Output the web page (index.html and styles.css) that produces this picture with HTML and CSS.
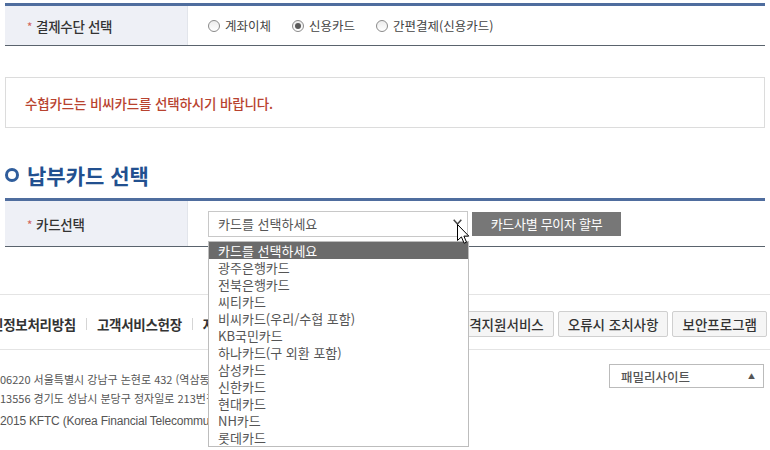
FILE: index.html
```html
<!DOCTYPE html>
<html lang="ko">
<head>
<meta charset="utf-8">
<title>납부카드 선택</title>
<link rel="stylesheet" href="styles.css">
</head>
<body>
<div class="page">
  <div class="form-table">
    <div class="row">
      <div class="th"><span class="req">*</span>결제수단 선택</div>
      <div class="td">
        <label class="radio"><span class="dot"></span>계좌이체</label>
        <label class="radio checked"><span class="dot"></span>신용카드</label>
        <label class="radio"><span class="dot"></span>간편결제(신용카드)</label>
      </div>
    </div>
  </div>

  <div class="notice">수협카드는 비씨카드를 선택하시기 바랍니다.</div>

  <h2 class="sec-title"><span class="ring"></span>납부카드 선택</h2>

  <div class="form-table card">
    <div class="row">
      <div class="th"><span class="req">*</span>카드선택</div>
      <div class="td">
        <div class="select-wrap">
          <div class="select">카드를 선택하세요<svg class="chev" width="9" height="6" viewBox="0 0 9 6"><path d="M0.7 0.7L4.5 5L8.3 0.7" fill="none" stroke="#444" stroke-width="1.5"/></svg></div>
          <ul class="listbox">
            <li class="sel">카드를 선택하세요</li>
            <li>광주은행카드</li>
            <li>전북은행카드</li>
            <li>씨티카드</li>
            <li>비씨카드(우리/수협 포함)</li>
            <li>KB국민카드</li>
            <li>하나카드(구 외환 포함)</li>
            <li>삼성카드</li>
            <li>신한카드</li>
            <li>현대카드</li>
            <li>NH카드</li>
            <li>롯데카드</li>
          </ul>
          <svg class="cursor" width="13" height="20" viewBox="0 0 13 20"><path d="M0.5 0.5V16.5L4.4 12.9L7.1 19.2L9.5 18.2L6.9 12.1H11.8Z" fill="#fff" stroke="#000" stroke-width="1" stroke-linejoin="miter"/></svg>
        </div>
        <button class="btn-dark" type="button">카드사별 무이자 할부</button>
      </div>
    </div>
  </div>
</div>

<footer class="footer">
  <div class="foot-nav">
    <div class="links">
      <span class="lnk">개인정보처리방침</span><span class="sep"></span>
      <span class="lnk">고객서비스헌장</span><span class="sep"></span>
      <span class="lnk">자주하는 질문</span>
    </div>
    <div class="btns">
      <button class="fbtn" type="button">원격지원서비스</button>
      <button class="fbtn" type="button">오류시 조치사항</button>
      <button class="fbtn" type="button">보안프로그램</button>
    </div>
  </div>
  <div class="foot-info">
    <div class="addr">
      <p class="line">06220 서울특별시 강남구 논현로 432 (역삼동, 금융결제원)</p>
      <p class="line">13556 경기도 성남시 분당구 정자일로 213번길 18</p>
      <p class="line copy">2015 KFTC (Korea Financial Telecommunications &amp; Clearings Institute)</p>
    </div>
    <div class="family">패밀리사이트<span class="tri">▲</span></div>
  </div>
</footer>
</body>
</html>
```
FILE: styles.css
```css
html, body {
  margin: 0;
  padding: 0;
}
body {
  width: 770px;
  height: 450px;
  overflow: hidden;
  background: #fff;
  color: #333;
  font-family: "Noto Sans CJK KR", "Malgun Gothic", sans-serif;
}

.page {
  padding: 3px 5px 0 5px;
}

.form-table {
  border-top: 3px solid #4f6d9e;
  border-bottom: 1px solid #5a636d;
}
.row {
  display: flex;
  height: 39px;
}
.card .row {
  height: 45px;
}
.th {
  width: 183px;
  box-sizing: border-box;
  border-right: 1px solid #e2e5eb;
  background: #eef0f6;
  display: flex;
  align-items: center;
  padding-left: 22px;
  font-size: 13.5px;
  font-weight: 500;
  letter-spacing: -0.3px;
  color: #333;
}
.req {
  color: #d2675d;
  font-size: 11px;
  margin-right: 4px;
}
.td {
  flex: 1;
  display: flex;
  align-items: center;
  padding-left: 20px;
}

.radio {
  display: flex;
  align-items: center;
  font-size: 12.5px;
  color: #444;
  margin-right: 21px;
}
.dot {
  width: 12px;
  height: 12px;
  box-sizing: border-box;
  border: 1px solid #8a8a8a;
  border-radius: 50%;
  background: linear-gradient(#ececec, #fff);
  margin-right: 5px;
  display: flex;
  align-items: center;
  justify-content: center;
}
.checked .dot::after {
  content: "";
  width: 6px;
  height: 6px;
  border-radius: 50%;
  background: #5a5a5a;
}

.notice {
  margin-top: 31px;
  height: 49px;
  border: 1px solid #dcdcdc;
  display: flex;
  align-items: center;
  padding-left: 19px;
  font-size: 13.5px;
  font-weight: 500;
  letter-spacing: -0.15px;
  color: #b8432f;
}

.sec-title {
  margin: 33px 0 9px;
  height: 28px;
  display: flex;
  align-items: center;
  font-size: 21px;
  font-weight: 700;
  letter-spacing: 0;
  color: #22508f;
}
.ring {
  width: 14px;
  height: 14px;
  box-sizing: border-box;
  border: 3.5px solid #2f5d9c;
  border-radius: 50%;
  margin-right: 8px;
}

.select-wrap {
  position: relative;
}
.select {
  width: 260px;
  height: 26px;
  box-sizing: border-box;
  border: 1px solid #c8c8c8;
  display: flex;
  align-items: center;
  padding-left: 9px;
  font-size: 13px;
  color: #555;
  background: #fff;
}
.chev {
  margin-left: auto;
  margin-right: 5px;
  margin-bottom: 3px;
}
.listbox {
  position: absolute;
  left: 0;
  top: 30px;
  width: 261px;
  box-sizing: border-box;
  margin: 0;
  padding: 0;
  list-style: none;
  border: 1px solid #bdbdbd;
  background: #fff;
  z-index: 5;
}
.listbox li {
  height: 17px;
  line-height: 17px;
  padding-left: 9px;
  font-size: 13px;
  color: #555;
}
.listbox li.sel {
  background: #6b6b6b;
  color: #fff;
}
.cursor {
  position: absolute;
  left: 249px;
  top: 13px;
  z-index: 6;
}
.btn-dark {
  margin-left: 4px;
  width: 149px;
  height: 24px;
  border: 0;
  padding: 0;
  background: #777;
  color: #fff;
  font-family: inherit;
  font-size: 13px;
  letter-spacing: -0.3px;
}

.footer {
  margin-top: 47px;
}
.foot-nav {
  height: 54px;
  border-top: 1px solid #e4e4e4;
  border-bottom: 1px solid #e4e4e4;
  display: flex;
  align-items: center;
}
.links {
  display: flex;
  align-items: center;
  margin-left: -21px;
  padding-top: 3px;
  font-size: 13.5px;
  font-weight: 700;
  letter-spacing: -0.3px;
  color: #333;
  white-space: nowrap;
}
.sep {
  width: 1px;
  height: 12px;
  background: #d5d5d5;
  margin: 0 10px;
}
.btns {
  margin-left: auto;
  margin-right: 3px;
  padding-top: 4px;
  display: flex;
  gap: 4px;
}
.fbtn {
  height: 26px;
  padding: 0 9px;
  border: 1px solid #cfcfcf;
  border-radius: 2px;
  background: #f5f5f5;
  font-family: inherit;
  font-size: 13.5px;
  font-weight: 500;
  letter-spacing: 0;
  color: #333;
  white-space: nowrap;
}

.foot-info {
  display: flex;
  align-items: flex-start;
}
.addr {
  padding-top: 20px;
  font-size: 11px;
  line-height: 19px;
  color: #555;
  white-space: nowrap;
}
.line {
  margin: 0;
}
.copy {
  margin-top: 4px;
  font-family: "Liberation Sans", Arial, sans-serif;
  font-size: 12px;
  letter-spacing: -0.2px;
}
.family {
  margin-left: auto;
  margin-right: 6px;
  margin-top: 14px;
  width: 155px;
  height: 24px;
  box-sizing: border-box;
  border: 1px solid #bbb;
  display: flex;
  align-items: center;
  padding-left: 11px;
  font-size: 12.5px;
  font-weight: 500;
  color: #555;
}
.tri {
  margin-left: auto;
  margin-right: 8px;
  font-size: 7px;
  color: #555;
}
```
